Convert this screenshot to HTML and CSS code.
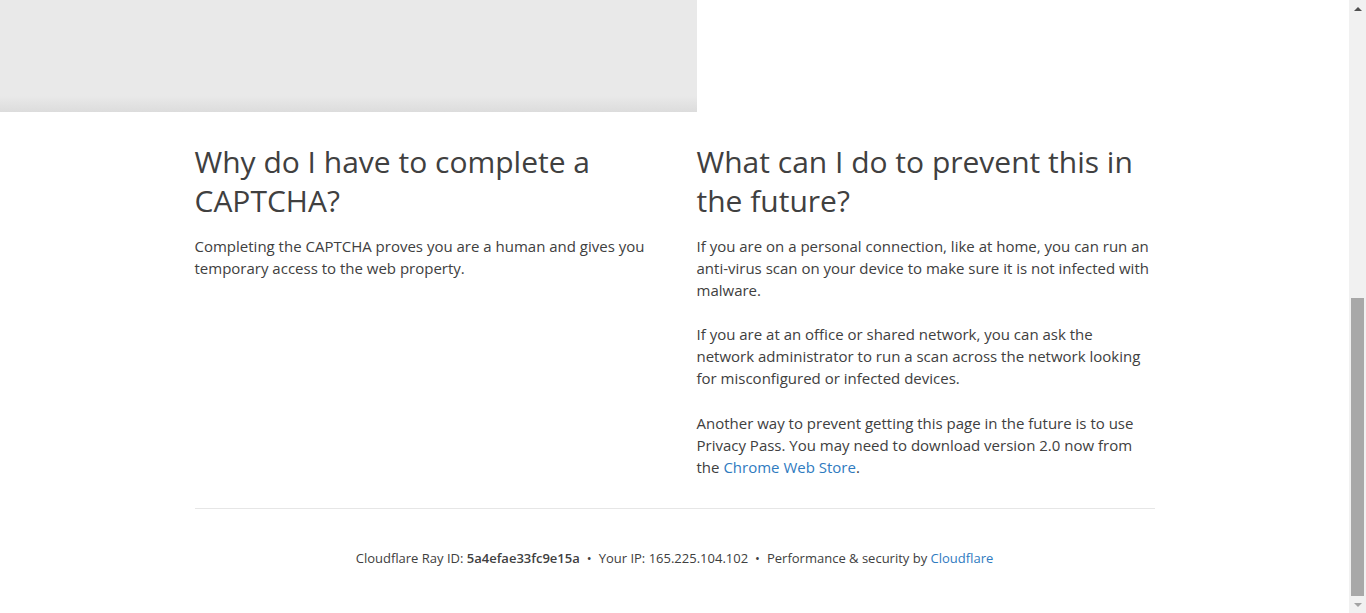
FILE: index.html
```html
<!DOCTYPE html>
<html lang="en">
<head>
<meta charset="utf-8">
<title>Attention Required! | Cloudflare</title>
<link rel="stylesheet" href="styles.css">
</head>
<body>
<div class="page">
  <div class="highlight"></div>
  <div class="columns">
    <div class="column">
      <h2>Why do I have to complete a CAPTCHA?</h2>
      <p>Completing the CAPTCHA proves you are a human and gives you temporary access to the web property.</p>
    </div>
    <div class="column">
      <h2>What can I do to prevent this in the future?</h2>
      <p>If you are on a personal connection, like at home, you can run an anti-virus scan on your device to make sure it is not infected with malware.</p>
      <p class="mid">If you are at an office or shared network, you can ask the network administrator to run a scan across the network looking for misconfigured or infected devices.</p>
      <p class="last">Another way to prevent getting this page in the future is to use Privacy Pass. You may need to download version 2.0 now from the <a href="#">Chrome Web Store</a>.</p>
    </div>
  </div>
  <div class="footer">
    <span class="item">Cloudflare Ray ID: <strong>5a4efae33fc9e15a</strong></span><span class="sep">&bull;</span><span class="item">Your IP: 165.225.104.102</span><span class="sep">&bull;</span><span class="item">Performance &amp; security by <a href="#">Cloudflare</a></span>
  </div>
</div>
<div class="scrollbar">
  <div class="arrow arrow-up"></div>
  <div class="track"><div class="thumb"></div></div>
  <div class="arrow arrow-down"></div>
</div>
</body>
</html>
```
FILE: styles.css
```css
html, body {
  margin: 0;
  padding: 0;
  height: 613px;
  overflow: hidden;
}
body {
  display: flex;
  font-family: "Open Sans", "Liberation Sans", sans-serif;
  color: #404040;
  background: #fff;
}
.page {
  flex: 1;
  min-width: 0;
}
.highlight {
  width: 697px;
  height: 112px;
  background: linear-gradient(to bottom, #e9e9e9 0, #e9e9e9 96px, #dcdcdc 112px);
}
.columns {
  width: 960px;
  margin: 0 auto;
  padding-top: 30px;
  display: grid;
  grid-template-columns: 456px 456px;
  column-gap: 46px;
}
h2 {
  font-size: 30px;
  line-height: 39px;
  font-weight: 400;
  margin: 0 0 15px;
  color: #404040;
}
p {
  font-size: 15px;
  line-height: 22px;
  margin: 0 0 22px;
}
p.mid {
  margin-bottom: 23px;
}
p.last {
  margin-bottom: 0;
}
a {
  color: #2f7bbf;
  text-decoration: none;
}
.footer {
  width: 960px;
  margin: 30px auto 0;
  border-top: 1px solid #e6e6e6;
  padding-top: 40px;
  text-align: center;
  font-size: 13px;
  line-height: 18px;
}
.footer strong {
  font-weight: 600;
}
.sep {
  margin: 0 7px;
}
.scrollbar {
  width: 17px;
  flex: none;
  background: #f1f1f1;
  display: flex;
  flex-direction: column;
}
.arrow {
  height: 17px;
  display: flex;
  align-items: center;
  justify-content: center;
}
.arrow::before {
  content: "";
  width: 0;
  height: 0;
  border-left: 4px solid transparent;
  border-right: 4px solid transparent;
}
.arrow-up::before {
  border-bottom: 4px solid #505050;
}
.arrow-down::before {
  border-top: 4px solid #a3a3a3;
}
.track {
  flex: 1;
  display: flex;
  flex-direction: column;
  justify-content: flex-end;
}
.thumb {
  height: 298px;
  margin: 0 2px;
  background: #a8a8a8;
}
```
